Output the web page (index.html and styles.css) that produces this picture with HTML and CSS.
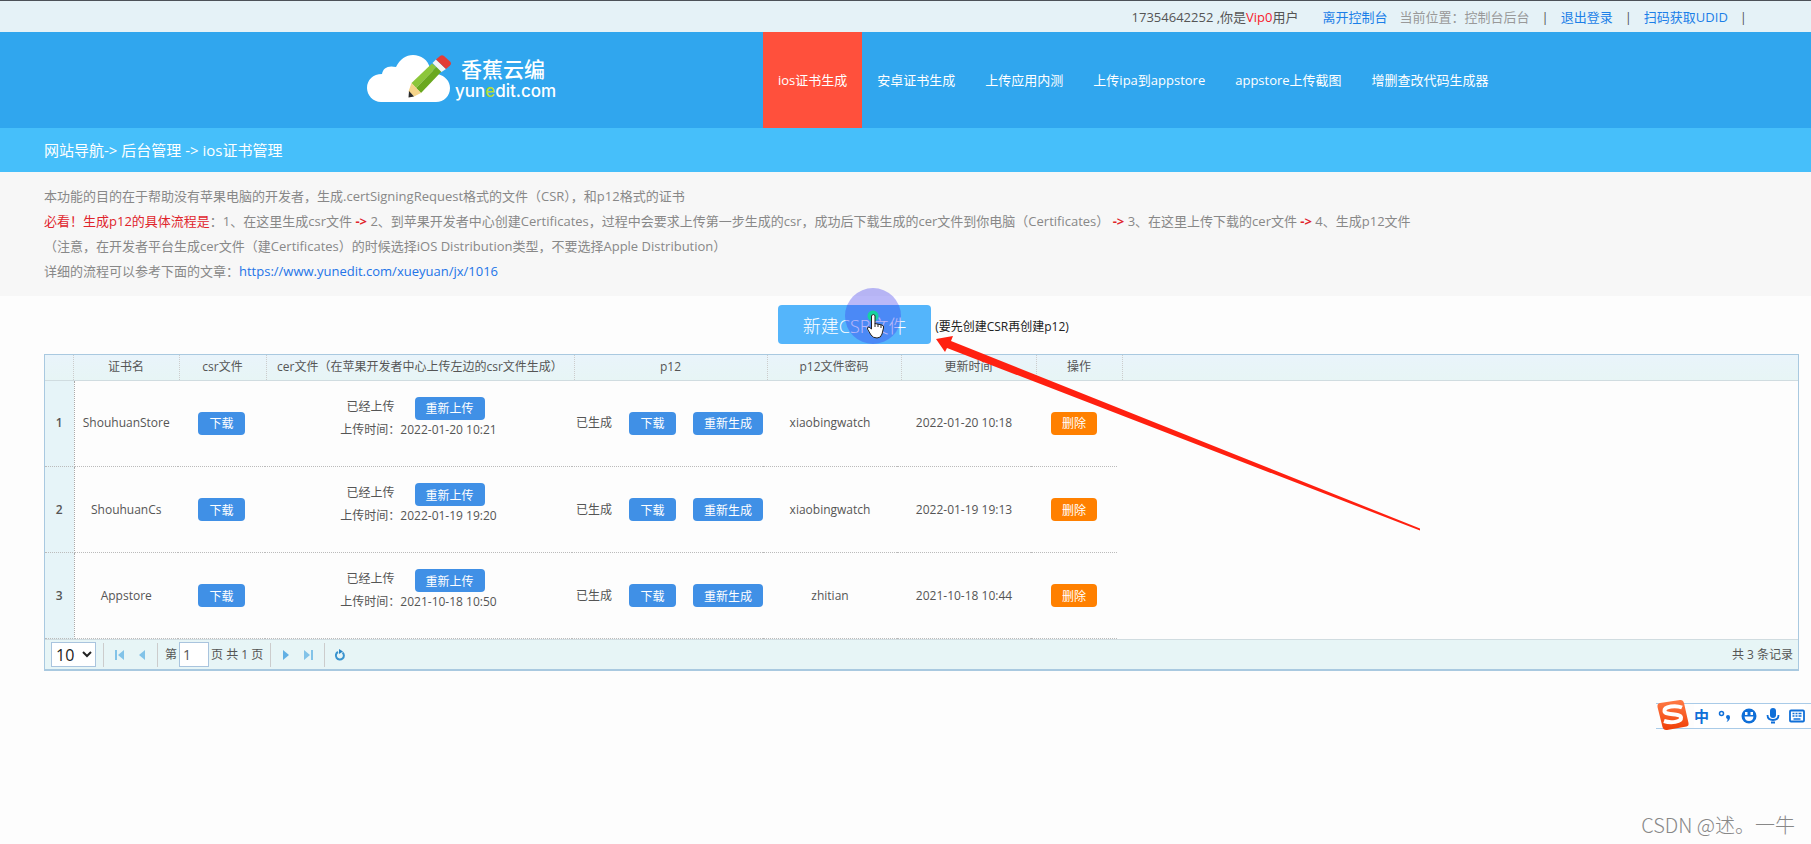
FILE: index.html
```html
<!DOCTYPE html>
<html lang="zh-CN">
<head>
<meta charset="utf-8">
<title>ios证书管理</title>
<link rel="stylesheet" href="styles.css">
</head>
<body>
<div class="topbar">
  <span class="user">17354642252 ,你是<em>Vip0</em>用户</span>
  <a href="#">离开控制台</a>
  <span class="where">当前位置：控制台后台</span>
  <span class="bar">|</span>
  <a href="#">退出登录</a>
  <span class="bar">|</span>
  <a href="#">扫码获取UDID</a>
  <span class="bar">|</span>
</div>

<header class="header">
  <div class="header-inner">
    <a class="logo" href="#">
      <svg width="88" height="50" viewBox="0 0 88 50" aria-hidden="true">
        <path d="M14 48C6 48 0 41 0 34c0-8 6-14 15-14 1-6 6-9 14-7C33 5 39 1 46 1c8 0 15 5 17 13l8 6c7 2 12 7 12 14 0 8-6 14-14 14z" fill="#fff"/>
        <path d="M44.500 29 65 9.500l4.500 3.500L49 34z" fill="#8cc63a"/>
        <path d="M49 34 69.500 13l5 4.500L54 39z" fill="#6aa81f"/>
        <path d="M44.500 29 54 39l-7 3.500-5.500-5z" fill="#f5d48a"/>
        <path d="M42 37l5 5.500-5.500 1z" fill="#2b2b2b"/>
        <path d="M65.500 9 69 5.500 79 15l-4.500 3z" fill="#f4f4f4"/>
        <path d="M69 5.500 73 2q2-1.500 4 0l6 5.500q2 2 0 4L79 15z" fill="#e33b36"/>
      </svg>
      <span class="logo-text">
        <span class="logo-cn">香蕉云编</span>
        <span class="logo-en">yun<i>e</i>dit.com</span>
      </span>
    </a>
    <nav class="nav">
      <a class="active" href="#">ios证书生成</a>
      <a href="#">安卓证书生成</a>
      <a href="#">上传应用内测</a>
      <a href="#">上传ipa到appstore</a>
      <a href="#">appstore上传截图</a>
      <a href="#">增删查改代码生成器</a>
    </nav>
  </div>
</header>

<div class="crumbs">网站导航-&gt; 后台管理 -&gt; ios证书管理</div>

<section class="intro">
  <p>本功能的目的在于帮助没有苹果电脑的开发者，生成.certSigningRequest格式的文件（CSR），和p12格式的证书</p>
  <p><em>必看！生成p12的具体流程是</em>：1、在这里生成csr文件 <b>-&gt;</b> 2、到苹果开发者中心创建Certificates，过程中会要求上传第一步生成的csr，成功后下载生成的cer文件到你电脑（Certificates） <b>-&gt;</b> 3、在这里上传下载的cer文件 <b>-&gt;</b> 4、生成p12文件</p>
  <p>（注意，在开发者平台生成cer文件（建Certificates）的时候选择iOS Distribution类型，不要选择Apple Distribution）</p>
  <p>详细的流程可以参考下面的文章：<a href="#">https://www.yunedit.com/xueyuan/jx/1016</a></p>
</section>

<div class="create">
  <div class="create-group">
    <button class="create-btn" type="button">新建CSR文件</button>
    <span class="create-note">(要先创建CSR再创建p12)</span>
    <svg class="pointer" width="60" height="60" viewBox="0 0 60 60" aria-hidden="true">
      <circle cx="30" cy="30" r="28" fill="#3d36ee" fill-opacity=".35"/>
      <circle cx="30" cy="30" r="5.500" fill="#16d3a0"/>
      <path d="M28.500 29.500q2-2 3.500 0v8l7 1.500q2 .5 1.500 3l-1.500 6q-1 4-5 4-4 0-6-3l-3.500-6q-.5-2 1.500-2l2.500 2z" fill="#fff" stroke="#222" stroke-width="1"/>
      <path d="M32 37v4M35 38v3M38 39v3" stroke="#222" stroke-width="1"/>
    </svg>
    <svg class="arrow" width="486" height="196" viewBox="0 0 486 196" aria-hidden="true">
      <path d="M1 4 18 1 16 6 485 193.500V195.500L12 13 10 17z" fill="#ff2010"/>
    </svg>
  </div>
</div>

<section class="grid">
  <table class="grid-head">
    <colgroup><col class="h0"><col class="h1"><col class="h2"><col class="h3"><col class="h4"><col class="h5"><col class="h6"><col class="h7"><col></colgroup>
    <tr><th></th><th>证书名</th><th>csr文件</th><th>cer文件（在苹果开发者中心上传左边的csr文件生成）</th><th>p12</th><th>p12文件密码</th><th>更新时间</th><th>操作</th><th></th></tr>
  </table>
  <table class="grid-body">
    <colgroup><col class="b0"><col class="b1"><col class="b2"><col class="b3"><col class="b4"><col class="b5"><col class="b6"><col class="b7"></colgroup>
    <tr>
      <th>1</th><td>ShouhuanStore</td><td><button type="button">下载</button></td>
      <td><div class="cer"><div class="cer-line"><span>已经上传</span><button type="button">重新上传</button></div><div>上传时间：2022-01-20 10:21</div></div></td>
      <td><div class="p12"><span>已生成</span><button type="button">下载</button><button type="button">重新生成</button></div></td>
      <td>xiaobingwatch</td><td>2022-01-20 10:18</td><td><button class="del" type="button">删除</button></td>
    </tr>
    <tr>
      <th>2</th><td>ShouhuanCs</td><td><button type="button">下载</button></td>
      <td><div class="cer"><div class="cer-line"><span>已经上传</span><button type="button">重新上传</button></div><div>上传时间：2022-01-19 19:20</div></div></td>
      <td><div class="p12"><span>已生成</span><button type="button">下载</button><button type="button">重新生成</button></div></td>
      <td>xiaobingwatch</td><td>2022-01-19 19:13</td><td><button class="del" type="button">删除</button></td>
    </tr>
    <tr>
      <th>3</th><td>Appstore</td><td><button type="button">下载</button></td>
      <td><div class="cer"><div class="cer-line"><span>已经上传</span><button type="button">重新上传</button></div><div>上传时间：2021-10-18 10:50</div></div></td>
      <td><div class="p12"><span>已生成</span><button type="button">下载</button><button type="button">重新生成</button></div></td>
      <td>zhitian</td><td>2021-10-18 10:44</td><td><button class="del" type="button">删除</button></td>
    </tr>
  </table>
  <div class="pager">
    <select aria-label="每页条数"><option>10</option></select>
    <i class="sep"></i>
    <button type="button" aria-label="首页"><svg width="10" height="10"><path d="M1 0h2v10H1zM10 0v10L4 5z" fill="#82c3e8"/></svg></button>
    <button type="button" aria-label="上一页"><svg width="10" height="10"><path d="M8 0v10L2 5z" fill="#82c3e8"/></svg></button>
    <i class="sep"></i>
    <label class="page">第<input type="text" value="1">页 共 1 页</label>
    <i class="sep"></i>
    <button type="button" aria-label="下一页"><svg width="10" height="10"><path d="M2 0v10l6-5z" fill="#62b0e4"/></svg></button>
    <button type="button" aria-label="末页"><svg width="10" height="10"><path d="M0 0v10l6-5zM7 0h2v10H7z" fill="#82c3e8"/></svg></button>
    <i class="sep"></i>
    <button type="button" aria-label="刷新"><svg width="12" height="12" viewBox="0 0 12 12"><path d="M8.500 3.500A4 4 0 1 1 4 3" fill="none" stroke="#3a94cf" stroke-width="2"/><path d="M5 0 9 2.500 5 5z" fill="#2a84c4"/></svg></button>
    <span class="total">共 3 条记录</span>
  </div>
</section>

<div class="ime">
  <svg class="ime-logo" width="34" height="34" viewBox="0 0 34 34" aria-hidden="true">
    <defs><linearGradient id="so" x1="0" y1="0" x2="0" y2="1"><stop offset="0" stop-color="#ff7a45"/><stop offset="1" stop-color="#f04008"/></linearGradient></defs>
    <path d="M4 5 24 2q3-.5 4 3l4.500 20q.5 3-2 3.500L11 32q-3.500.5-4.500-3L1.500 9Q1 5.500 4 5z" fill="url(#so)"/>
    <path d="M26 9.500C20 7 8 8 8.500 13c.5 5 16 1.500 16.500 6.500.5 4.500-10 6-17 3.500" fill="none" stroke="#fff" stroke-width="4"/>
  </svg>
  <span class="ime-mode">中</span>
  <svg width="14" height="16" viewBox="0 0 14 16" aria-hidden="true"><circle cx="3.500" cy="5.500" r="2" fill="none" stroke="#0f6fd8" stroke-width="1.500"/><path d="M8 9a2 2 0 1 1 4 0q0 3.500-3.500 5 1.500-2 1-3Q8 10.500 8 9z" fill="#0f6fd8"/></svg>
  <svg width="16" height="16" viewBox="0 0 16 16" aria-hidden="true"><circle cx="8" cy="8" r="7.500" fill="#0f6fd8"/><rect x="4" y="4" width="2.500" height="3" fill="#fff"/><rect x="9.500" y="4" width="2.500" height="3" fill="#fff"/><path d="M3.500 8.500h9q-.5 4.500-4.500 4.500T3.500 8.500z" fill="#fff"/></svg>
  <svg width="14" height="16" viewBox="0 0 14 16" aria-hidden="true"><rect x="4" y="0" width="6" height="10" rx="3" fill="#0f6fd8"/><path d="M1.500 7q0 5 5.500 5t5.500-5" fill="none" stroke="#0f6fd8" stroke-width="1.800"/><path d="M5 14.500h4" stroke="#0f6fd8" stroke-width="2"/></svg>
  <svg width="16" height="14" viewBox="0 0 16 14" aria-hidden="true"><rect x="1" y="1.500" width="14" height="11" rx="1" fill="#fff" stroke="#0f6fd8" stroke-width="1.800"/><path d="M3.500 4.500h2m1 0h2m1 0h3M3.500 7h2m1 0h2m1 0h3M4.500 10h7" stroke="#0f6fd8" stroke-width="1.500"/></svg>
</div>
<div class="watermark">CSDN @述。一牛</div>
</body>
</html>
```
FILE: styles.css
```css
* { box-sizing: border-box; }
body {
  margin: 0;
  min-height: 100vh;
  position: relative;
  overflow-x: hidden;
  background: #fdfdfd;
  color: #555;
  font: 12px/20px "Open Sans", "Noto Sans CJK SC", sans-serif;
}
button, input, select { font-family: inherit; }
a { text-decoration: none; color: #1b7fe8; }
em, i { font-style: normal; }
table { border-collapse: collapse; table-layout: fixed; }

.topbar {
  display: flex;
  justify-content: flex-end;
  align-items: center;
  gap: 12px;
  height: 32px;
  padding: 0 64px 0 0;
  border-top: 1px solid #4c5258;
  background: #e5f2f7;
  font-size: 13px;
  white-space: nowrap;
}
.user { margin-right: 12px; }
.user em { color: #f8202c; }
.where { color: #999; }

.header { background: #30a6ee; }
.header-inner {
  display: flex;
  width: 1077px;
  max-width: 100%;
  margin: 0 auto;
  height: 96px;
}
.logo {
  display: flex;
  align-items: center;
  flex: none;
  width: 396px;
  padding-bottom: 2px;
  color: #fff;
}
.logo-text { display: flex; flex-direction: column; }
.logo-cn { padding-left: 6px; font: 500 21px/24px "Noto Sans CJK SC", sans-serif; }
.logo-en { font: 500 17px/22px Inter, sans-serif; }
.logo-en i { color: #b5dc3c; }
.nav { display: flex; white-space: nowrap; }
.nav a {
  padding: 0 15px;
  color: #fff;
  font-size: 13px;
  line-height: 96px;
}
.nav .active { background: #ff503c; }

.crumbs {
  padding: 0 44px;
  background: #46bffa;
  color: #fff;
  font-size: 15px;
  line-height: 44px;
}

.intro {
  padding: 12px 44px 12px;
  background: #f7f7f7;
  color: #888;
  font-size: 13px;
  line-height: 25px;
}
.intro p { margin: 0; }
.intro em, .intro b { color: #e0242c; }
.intro a { color: #2374e8; }

.create {
  display: flex;
  justify-content: center;
  padding: 9px 0 10px 36px;
}
.create-group { position: relative; display: flex; align-items: center; gap: 4px; }
.create-btn {
  width: 153px;
  height: 39px;
  border: 0;
  border-radius: 4px;
  background: #54b5fb;
  color: #fff;
  font-size: 18px;
  font-weight: 300;
}
.create-note { padding-top: 4px; color: #222; }
.pointer { position: absolute; left: 65px; top: -19px; }
.arrow { position: absolute; left: 157px; top: 30px; z-index: 2; }

.grid {
  margin: 0 12px 0 44px;
  border: 1px solid #a9c9e0;
  border-bottom-width: 2px;
}
.grid-head {
  width: 100%;
  background: linear-gradient(#e9f4fb, #e7f5f5);
  border-bottom: 1px solid #d0dce0;
}
.grid-head th {
  height: 25px;
  padding: 0;
  border-right: 1px dotted #ccc;
  font-weight: 400;
  white-space: nowrap;
}
.grid-head th:last-child { border: 0; }
.h0 { width: 28px; } .h1 { width: 106px; } .h2 { width: 87px; } .h3 { width: 308px; }
.h4 { width: 193px; } .h5 { width: 134px; } .h6 { width: 135px; } .h7 { width: 86px; }
.grid-body { width: 1072px; }
.b0 { width: 29px; } .b1 { width: 104px; } .b2 { width: 87px; } .b3 { width: 307px; }
.b4 { width: 191px; } .b5 { width: 134px; } .b6 { width: 134px; } .b7 { width: 86px; }
.grid-body th, .grid-body td {
  height: 86px;
  padding: 0;
  border-bottom: 1px dotted #bbb;
  text-align: center;
  white-space: nowrap;
}
.grid-body th { background: #e6f4f8; border-right: 1px dotted #aaa; font-weight: 600; }
.grid-body button {
  height: 23px;
  padding: 0 11px;
  border: 0;
  border-radius: 4px;
  background: #4090e6;
  color: #fff;
  font-size: 12px;
}
.grid-body .del { background: #ff8000; }
.cer { padding-bottom: 10px; }
.cer-line { display: flex; justify-content: center; gap: 20px; padding-right: 6px; }
.p12 { display: flex; justify-content: space-between; align-items: center; padding-left: 4px; }

.pager {
  display: flex;
  align-items: center;
  gap: 7px;
  height: 30px;
  padding: 0 5px 0 6px;
  background: #e7f5f6;
  border-top: 1px solid #d0dce0;
}
.pager select {
  width: 45px;
  height: 25px;
  padding: 0;
  border: 1px solid #a9c4de;
  background: #fff;
  color: #222;
  font-size: 16px;
}
.pager button { width: 16px; height: 16px; padding: 0; border: 0; background: none; line-height: 0; }
.sep { width: 1px; height: 24px; background: #ccc; }
.page { display: flex; align-items: center; gap: 2px; }
.page input {
  width: 30px;
  height: 25px;
  padding: 0 3px;
  border: 1px solid #a9c4de;
  color: #555;
  font-size: 14px;
}
.total { margin-left: auto; }

.ime {
  position: absolute;
  right: 0;
  top: 703px;
  display: flex;
  align-items: center;
  gap: 9px;
  height: 26px;
  padding: 0 6px 0 38px;
  border: 1px solid #a9cbe8;
  border-width: 1px 0;
  background: linear-gradient(#fff, #fff) content-box;
}
.ime-logo { position: absolute; left: 0; top: -6px; }
.ime-mode { color: #0f6fd8; font-size: 15px; font-weight: 700; }
.watermark {
  position: absolute;
  right: 16px;
  bottom: 6px;
  color: #888;
  font: 300 20px/26px "Noto Sans CJK SC", sans-serif;
}
```
